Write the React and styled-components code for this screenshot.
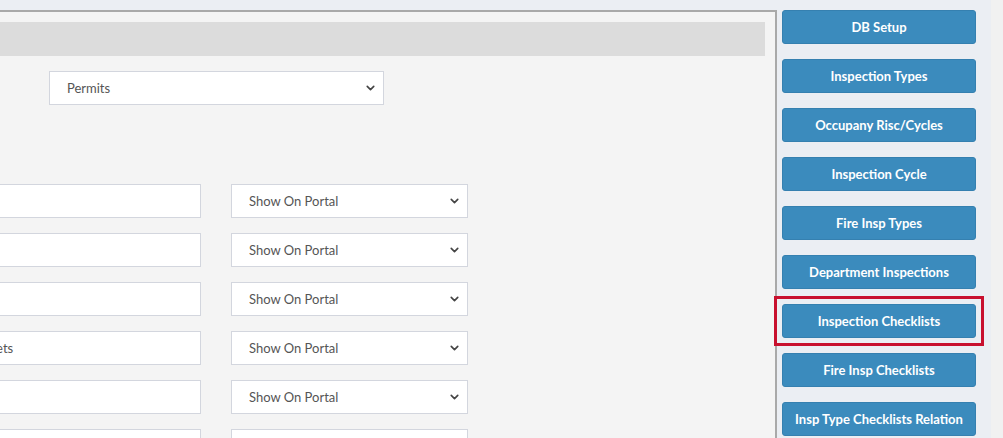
import React from "react";
import styled, { createGlobalStyle } from "styled-components";
import { ChevronDown } from "lucide-react";

const GlobalStyle = createGlobalStyle`
  html, body {
    margin: 0;
    padding: 0;
    background: #ebeef3;
    overflow: hidden;
  }
  * {
    box-sizing: border-box;
  }
`;

const Page = styled.div`
  display: flex;
  height: 438px;
  font-family: Lato, "Open Sans", sans-serif;
`;

const Main = styled.div`
  flex: 0 0 777px;
  margin-top: 10px;
  background: #f4f4f4;
  border-top: 2px solid #a9a9a9;
  border-right: 2px solid #a9a9a9;
  padding: 10px 10px 0 0;
  overflow: hidden;
`;

const HeaderBar = styled.div`
  height: 34px;
  margin-left: -20px;
  background: #dcdcdc;
`;

const Form = styled.div`
  margin-left: -135px;
  display: grid;
  grid-template-columns: 336px 237px;
  column-gap: 30px;
  row-gap: 15px;
`;

const TopRow = styled.div`
  grid-column: 1 / -1;
  padding: 15px 0 0 184px;
  margin-bottom: 64px;
`;

const SelectWrap = styled.div`
  position: relative;
  width: ${(p) => p.$width || "100%"};
`;

const Select = styled.select`
  appearance: none;
  width: 100%;
  height: 34px;
  padding: 0 30px 0 17px;
  border: 1px solid #d3d6de;
  border-radius: 0;
  background: #fff;
  color: #555;
  font-family: inherit;
  font-size: 13px;
  outline: none;
`;

const Caret = styled(ChevronDown)`
  position: absolute;
  right: 7px;
  top: 50%;
  transform: translateY(-50%);
  color: #444;
  pointer-events: none;
`;

const TextInput = styled.input`
  width: 100%;
  height: 34px;
  padding: 0 12px;
  border: 1px solid #d3d6de;
  border-radius: 0;
  background: #fff;
  color: #555;
  font-family: inherit;
  font-size: 13px;
  outline: none;
`;

const Sidebar = styled.div`
  flex: 0 0 214px;
  display: flex;
  flex-direction: column;
  gap: 15px;
  padding: 10px 15px 0 5px;
`;

const Highlight = styled.div`
  margin: -8px;
  padding: 5px;
  border: 3px solid #c8102e;
`;

const NavButton = styled.button`
  display: block;
  height: 34px;
  width: 100%;
  flex: none;
  background: #3b8bbd;
  border: 1px solid #3580b0;
  border-radius: 3px;
  color: #fff;
  font-family: inherit;
  font-size: 13px;
  font-weight: 700;
  cursor: pointer;
`;

const Strip = styled.div`
  flex: 1;
  background: #f1f1f1;
`;

const rows = ["", "", "", "Inspection Checksheets", "", ""];

const navItems = [
  "DB Setup",
  "Inspection Types",
  "Occupany Risc/Cycles",
  "Inspection Cycle",
  "Fire Insp Types",
  "Department Inspections",
  "Inspection Checklists",
  "Fire Insp Checklists",
  "Insp Type Checklists Relation",
];

const PortalSelect = () => (
  <SelectWrap>
    <Select defaultValue="show">
      <option value="show">Show On Portal</option>
      <option value="hide">Hide On Portal</option>
    </Select>
    <Caret size={13} strokeWidth={3} />
  </SelectWrap>
);

export default function App() {
  return (
    <>
      <GlobalStyle />
      <Page>
        <Main>
          <HeaderBar />
          <Form>
            <TopRow>
              <SelectWrap $width="335px">
                <Select defaultValue="permits">
                  <option value="permits">Permits</option>
                  <option value="inspections">Inspections</option>
                </Select>
                <Caret size={13} strokeWidth={3} />
              </SelectWrap>
            </TopRow>
            {rows.map((value, i) => (
              <React.Fragment key={i}>
                <TextInput defaultValue={value} />
                <PortalSelect />
              </React.Fragment>
            ))}
          </Form>
        </Main>
        <Sidebar>
          {navItems.map((label) =>
            label === "Inspection Checklists" ? (
              <Highlight key={label}>
                <NavButton>{label}</NavButton>
              </Highlight>
            ) : (
              <NavButton key={label}>{label}</NavButton>
            )
          )}
        </Sidebar>
        <Strip />
      </Page>
    </>
  );
}
